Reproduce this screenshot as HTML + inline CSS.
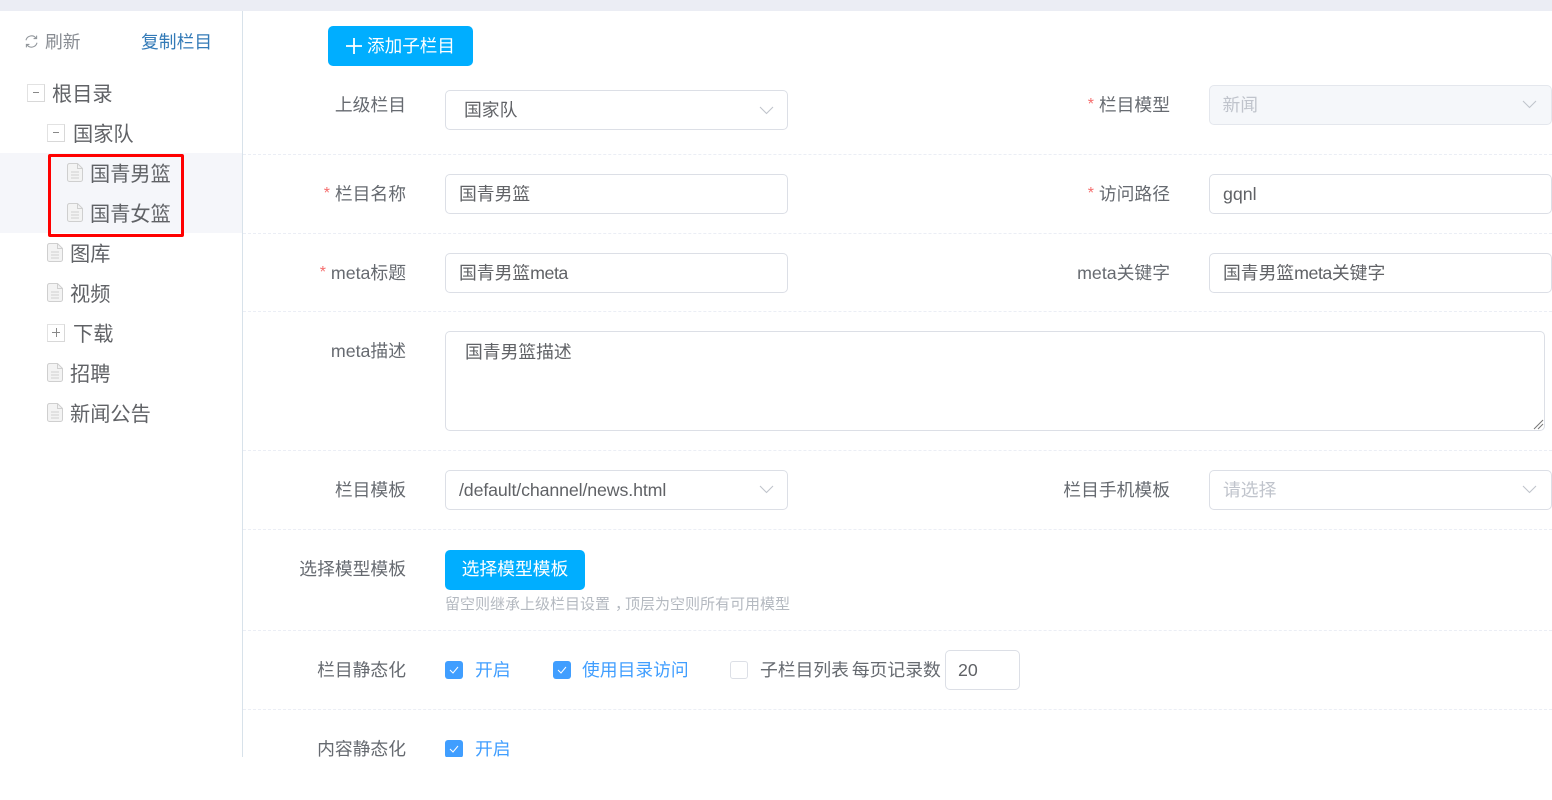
<!DOCTYPE html>
<html lang="zh">
<head>
<meta charset="utf-8">
<title>栏目管理</title>
<style>
html,body{margin:0;padding:0;width:1552px;height:800px;overflow:hidden;background:#fff}
body{position:relative;font-family:"Liberation Sans","Noto Sans CJK SC",sans-serif;color:#666a70}
.a{position:absolute}
.t{position:absolute;white-space:nowrap;font-size:17.8px;height:40px;line-height:40px;color:#666a70}
.r{text-align:right}
.req{color:#f56c6c;font-size:16px;position:relative;top:-2px}
.box{position:absolute;box-sizing:border-box;width:343px;height:40px;border:1px solid #dcdfe6;border-radius:5px;background:#fff;font-size:17.8px;line-height:38px;padding-left:13px;color:#606266;white-space:nowrap}
.line{position:absolute;left:243px;width:1309px;height:0;border-top:1px dashed #ebeef5}
.chev{position:absolute;width:15px;height:9px}
.doc{position:absolute;width:16px;height:19px}
.tg{position:absolute;box-sizing:border-box;width:18px;height:18px;border:1px solid #e2e2e2;border-right-color:#d8d8d8;border-bottom-color:#d8d8d8;background:#fff}
.tree{font-size:20.2px;color:#606266}
.cb{position:absolute;box-sizing:border-box;width:18px;height:18px;border-radius:3px;background:#409eff}
.cb svg{position:absolute;left:4px;top:5px}
.blue{color:#409eff}
.m{letter-spacing:-.45px}
</style>
</head>
<body>
<div class="a" style="left:0;top:0;width:1552px;height:11px;background:#ebedf4"></div>
<div class="a" style="left:242px;top:11px;width:1px;height:746px;background:#d8e2ea"></div>

<!-- sidebar -->
<svg class="a" style="left:24px;top:34px" width="15" height="15" viewBox="0 0 15 15" fill="none" stroke="#92979c" stroke-width="1.100"><path d="M2 6.200A5.600 5.600 0 0 1 12 4.200"/><path d="M12.600 1.600v3h-3"/><path d="M13 8.800A5.600 5.600 0 0 1 3 10.800"/><path d="M2.400 13.400v-3h3"/></svg>
<div class="t" style="left:45px;top:22px;color:#888c92">刷新</div>
<div class="t" style="left:141px;top:22px;color:#337ab7">复制栏目</div>

<div class="a" style="left:0;top:153px;width:242px;height:80px;background:#f5f6fa"></div>

<div class="tg" style="left:27px;top:84px"><div class="a" style="left:5px;top:7px;width:6px;height:1px;background:#888"></div></div>
<div class="t tree" style="left:52px;top:75px">根目录</div>
<div class="tg" style="left:47px;top:124px"><div class="a" style="left:5px;top:7px;width:6px;height:1px;background:#888"></div></div>
<div class="t tree" style="left:73px;top:115px">国家队</div>

<svg class="doc" style="left:67px;top:163px" viewBox="0 0 16 19" fill="none" stroke="#cfcfcf"><path d="M2.500.5h8l5 5v11a2 2 0 0 1-2 2h-11a2 2 0 0 1-2-2v-14a2 2 0 0 1 2-2z" fill="#f3f3f3"/><path d="M10.500.5v5h5M4 9h8M4 12h8M4 15h8"/></svg>
<div class="t tree" style="left:90px;top:155px">国青男篮</div>
<svg class="doc" style="left:67px;top:203px" viewBox="0 0 16 19" fill="none" stroke="#cfcfcf"><path d="M2.500.5h8l5 5v11a2 2 0 0 1-2 2h-11a2 2 0 0 1-2-2v-14a2 2 0 0 1 2-2z" fill="#f3f3f3"/><path d="M10.500.5v5h5M4 9h8M4 12h8M4 15h8"/></svg>
<div class="t tree" style="left:90px;top:195px">国青女篮</div>
<div class="a" style="left:48px;top:154px;width:136px;height:83px;box-sizing:border-box;border:3.500px solid #f00;border-radius:2px"></div>

<svg class="doc" style="left:47px;top:243px" viewBox="0 0 16 19" fill="none" stroke="#cfcfcf"><path d="M2.500.5h8l5 5v11a2 2 0 0 1-2 2h-11a2 2 0 0 1-2-2v-14a2 2 0 0 1 2-2z" fill="#f3f3f3"/><path d="M10.500.5v5h5M4 9h8M4 12h8M4 15h8"/></svg>
<div class="t tree" style="left:70px;top:235px">图库</div>
<svg class="doc" style="left:47px;top:283px" viewBox="0 0 16 19" fill="none" stroke="#cfcfcf"><path d="M2.500.5h8l5 5v11a2 2 0 0 1-2 2h-11a2 2 0 0 1-2-2v-14a2 2 0 0 1 2-2z" fill="#f3f3f3"/><path d="M10.500.5v5h5M4 9h8M4 12h8M4 15h8"/></svg>
<div class="t tree" style="left:70px;top:275px">视频</div>
<div class="tg" style="left:47px;top:324px"><div class="a" style="left:4px;top:7px;width:8px;height:1px;background:#888"></div><div class="a" style="left:8px;top:3px;width:1px;height:9px;background:#888"></div></div>
<div class="t tree" style="left:73px;top:315px">下载</div>
<svg class="doc" style="left:47px;top:363px" viewBox="0 0 16 19" fill="none" stroke="#cfcfcf"><path d="M2.500.5h8l5 5v11a2 2 0 0 1-2 2h-11a2 2 0 0 1-2-2v-14a2 2 0 0 1 2-2z" fill="#f3f3f3"/><path d="M10.500.5v5h5M4 9h8M4 12h8M4 15h8"/></svg>
<div class="t tree" style="left:70px;top:355px">招聘</div>
<svg class="doc" style="left:47px;top:403px" viewBox="0 0 16 19" fill="none" stroke="#cfcfcf"><path d="M2.500.5h8l5 5v11a2 2 0 0 1-2 2h-11a2 2 0 0 1-2-2v-14a2 2 0 0 1 2-2z" fill="#f3f3f3"/><path d="M10.500.5v5h5M4 9h8M4 12h8M4 15h8"/></svg>
<div class="t tree" style="left:70px;top:395px">新闻公告</div>

<!-- add button -->
<div class="a" style="left:328px;top:26px;width:145px;height:40px;background:#00aeff;border-radius:5px"></div>
<svg class="a" style="left:346px;top:38px" width="16" height="16" viewBox="0 0 16 16" stroke="#fff" stroke-width="1.800"><path d="M0 8h16M8 0v16"/></svg>
<div class="t" style="left:367px;top:26px;color:#fff;font-size:17.6px">添加子栏目</div>

<!-- dividers -->
<div class="line" style="top:154px"></div>
<div class="line" style="top:233px"></div>
<div class="line" style="top:311px"></div>
<div class="line" style="top:450px"></div>
<div class="line" style="top:529px"></div>
<div class="line" style="top:630px"></div>
<div class="line" style="top:709px"></div>

<!-- labels left -->
<div class="t r" style="left:250px;width:156px;top:85px">上级栏目</div>
<div class="t r" style="left:250px;width:156px;top:174px"><span class="req">*</span> 栏目名称</div>
<div class="t r" style="left:250px;width:156px;top:253px"><span class="req">*</span> meta标题</div>
<div class="t r" style="left:250px;width:156px;top:331px">meta描述</div>
<div class="t r" style="left:250px;width:156px;top:470px">栏目模板</div>
<div class="t r" style="left:250px;width:156px;top:549px">选择模型模板</div>
<div class="t r" style="left:250px;width:156px;top:650px">栏目静态化</div>
<div class="t r" style="left:250px;width:156px;top:729px">内容静态化</div>

<!-- labels right -->
<div class="t r" style="left:1014px;width:156px;top:85px"><span class="req">*</span> 栏目模型</div>
<div class="t r" style="left:1014px;width:156px;top:174px"><span class="req">*</span> 访问路径</div>
<div class="t r" style="left:1014px;width:156px;top:253px">meta关键字</div>
<div class="t r" style="left:1014px;width:156px;top:470px">栏目手机模板</div>

<!-- fields -->
<div class="box" style="left:445px;top:90px;padding-left:18px">国家队</div>
<svg class="chev" style="left:759px;top:106px" viewBox="0 0 15 9" fill="none" stroke="#c0c4cc" stroke-width="1.100"><path d="M1 1l6.500 6.500L14 1"/></svg>
<div class="box" style="left:1209px;top:85px;height:40px;padding-left:12.500px;background:#f5f7fa;border-color:#e4e7ed;color:#c0c4cc">新闻</div>
<svg class="chev" style="left:1522px;top:100px" viewBox="0 0 15 9" fill="none" stroke="#c0c4cc" stroke-width="1.100"><path d="M1 1l6.500 6.500L14 1"/></svg>

<div class="box" style="left:445px;top:174px">国青男篮</div>
<div class="box" style="left:1209px;top:174px">gqnl</div>
<div class="box" style="left:445px;top:253px">国青男篮<span class="m">meta</span></div>
<div class="box" style="left:1209px;top:253px">国青男篮<span class="m">meta</span>关键字</div>

<div class="box" style="left:445px;top:331px;width:1100px;height:100px;padding-left:19px;line-height:40px">国青男篮描述</div>
<svg class="a" style="left:1533px;top:419px" width="11" height="11" viewBox="0 0 11 11" stroke="#777" stroke-width="1"><path d="M1 10L10 1M5 10L10 5"/></svg>

<div class="box" style="left:445px;top:470px;letter-spacing:-.13px">/default/channel/news.html</div>
<svg class="chev" style="left:759px;top:485px" viewBox="0 0 15 9" fill="none" stroke="#c0c4cc" stroke-width="1.100"><path d="M1 1l6.500 6.500L14 1"/></svg>
<div class="box" style="left:1209px;top:470px;color:#c0c4cc">请选择</div>
<svg class="chev" style="left:1522px;top:485px" viewBox="0 0 15 9" fill="none" stroke="#c0c4cc" stroke-width="1.100"><path d="M1 1l6.500 6.500L14 1"/></svg>

<!-- choose template -->
<div class="a" style="left:445px;top:550px;width:140px;height:40px;background:#00aeff;border-radius:5px;color:#fff;font-size:17.8px;line-height:38px;text-align:center">选择模型模板</div>
<div class="t" style="left:445px;top:585px;font-size:15px;color:#b4b9c0">留空则继承上级栏目设置<span style="position:relative;left:5px">，</span>顶层为空则所有可用模型</div>

<!-- checkboxes -->
<div class="cb" style="left:445px;top:661px"><svg width="10" height="8" viewBox="0 0 10 8" fill="none" stroke="#fff" stroke-width="1"><path d="M1 4l3 3 5-6"/></svg></div>
<div class="t blue" style="left:475px;top:650px">开启</div>
<div class="cb" style="left:553px;top:661px"><svg width="10" height="8" viewBox="0 0 10 8" fill="none" stroke="#fff" stroke-width="1"><path d="M1 4l3 3 5-6"/></svg></div>
<div class="t blue" style="left:582px;top:650px">使用目录访问</div>
<div class="cb" style="left:730px;top:661px;background:#fff;border:1px solid #dcdfe6"></div>
<div class="t" style="left:760px;top:650px;word-spacing:-2px">子栏目列表 每页记录数</div>
<div class="box" style="left:945px;top:650px;width:75px;padding-left:12px">20</div>

<div class="cb" style="left:445px;top:740px"><svg width="10" height="8" viewBox="0 0 10 8" fill="none" stroke="#fff" stroke-width="1"><path d="M1 4l3 3 5-6"/></svg></div>
<div class="t blue" style="left:475px;top:729px">开启</div>

<!-- bottom clip -->
<div class="a" style="left:0;top:757px;width:1552px;height:43px;background:#fff"></div>
</body>
</html>
